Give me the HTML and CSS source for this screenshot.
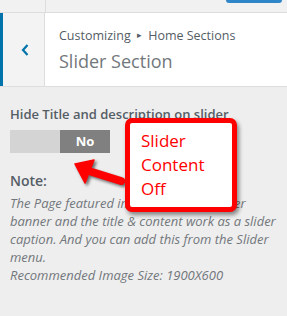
FILE: index.html
```html
<!DOCTYPE html>
<html lang="en">
<head>
    <meta charset="UTF-8">
    <title>Slider Section</title>
    <link rel="stylesheet" href="styles.css">
</head>
<body>

<div class="topbar">
    <div class="topbar-left"></div>
    <div class="publish"></div>
</div>

<div class="section-header">
    <button class="back-button" aria-label="Back">
        <svg width="8" height="12" viewBox="0 0 8 12"><path d="M6.5 1 L2 6 L6.5 11" fill="none" stroke="#0073aa" stroke-width="2.2"/></svg>
    </button>
    <div class="section-title">
        <div class="breadcrumb">Customizing <span class="sep">&#9656;</span> Home Sections</div>
        <h2>Slider Section</h2>
    </div>
</div>

<div class="controls">
    <div class="control-label">Hide Title and description on slider</div>
    <div class="toggle">
        <span class="toggle-yes"></span>
        <span class="toggle-no">No</span>
    </div>

    <div class="note-title">Note:</div>
    <p class="note">The Page featured image work as a slider banner and the title &amp; content work as a slider caption. And you can add this from the Slider menu.<br>Recommended Image Size: 1900X600</p>

    <!-- anotação vermelha -->
    <svg class="arrow" width="70" height="34" viewBox="0 0 70 34">
        <path d="M61 24 L32 15" stroke="#f00" stroke-width="8" stroke-linecap="round" fill="none"/>
        <polygon points="15,7 34,3 25,26" fill="#f00" stroke="#f00" stroke-width="1.5" stroke-linejoin="round"/>
    </svg>
    <div class="callout">Slider<br>Content<br>Off</div>
</div>

</body>
</html>
```

FILE: styles.css
```css
body {
    font-family: 'Open Sans', sans-serif;
    margin: 0;
    background-color: #eeeeee;
    color: #555d66;
}

.topbar {
    height: 12px;
    background-color: #f1f1f1;
    border-bottom: 1px solid #dddddd;
    display: flex;
    position: relative;
}

.topbar-left {
    width: 45px;
    border-right: 1px solid #dddddd;
}

.publish {
    position: absolute;
    left: 226px;
    top: 0;
    width: 56px;
    height: 3px;
    background-color: #2e86c8;
    border-radius: 0 0 3px 3px;
}

.section-header {
    display: flex;
    height: 73px;
    background-color: #ffffff;
    border-bottom: 1px solid #dddddd;
}

.back-button {
    width: 45px;
    border: none;
    border-left: 3px solid #0073aa;
    border-right: 1px solid #dddddd;
    background-color: #f3f3f3;
    padding: 0 0 0 2px;
    display: flex;
    align-items: center;
    justify-content: center;
}

.section-title {
    padding: 13px 0 0 14px;
}

.breadcrumb {
    font-size: 12.5px;
    line-height: 18px;
    color: #555d66;
}

.breadcrumb .sep {
    font-size: 9px;
    vertical-align: 2px;
    margin: 0 3px;
}

.section-title h2 {
    margin: 3px 0 0;
    font-size: 18px;
    font-weight: 400;
    line-height: 26px;
    color: #72777c;
}

.controls {
    position: relative;
    padding: 18px 10px 0;
}

.control-label {
    font-size: 13px;
    font-weight: 600;
    line-height: 18px;
}

.toggle {
    display: flex;
    width: 100px;
    height: 23px;
    margin-top: 7px;
}

.toggle-yes {
    flex: 1;
    background-color: #d4d4d4;
}

.toggle-no {
    flex: 1;
    background-color: #808080;
    color: #ffffff;
    font-size: 13px;
    font-weight: 700;
    text-align: center;
    line-height: 23px;
}

.note-title {
    margin-top: 18px;
    font-size: 14px;
    font-weight: 600;
    line-height: 20px;
}

.note {
    margin: 3px 0 0;
    font-size: 13px;
    font-style: italic;
    line-height: 18px;
    color: #72777c;
}

.arrow {
    position: absolute;
    left: 60px;
    top: 70px;
    filter: drop-shadow(2px 2px 1.5px rgba(0, 0, 0, 0.55));
}

.callout {
    position: absolute;
    left: 125px;
    top: 31px;
    width: 91px;
    height: 78px;
    padding: 6px 0 0 11px;
    background-color: #ffffff;
    border: 5px solid #ff0000;
    border-radius: 7px;
    box-shadow: 2px 3px 4px rgba(0, 0, 0, 0.45);
    color: #ff0000;
    font-size: 17px;
    line-height: 24px;
}
```
